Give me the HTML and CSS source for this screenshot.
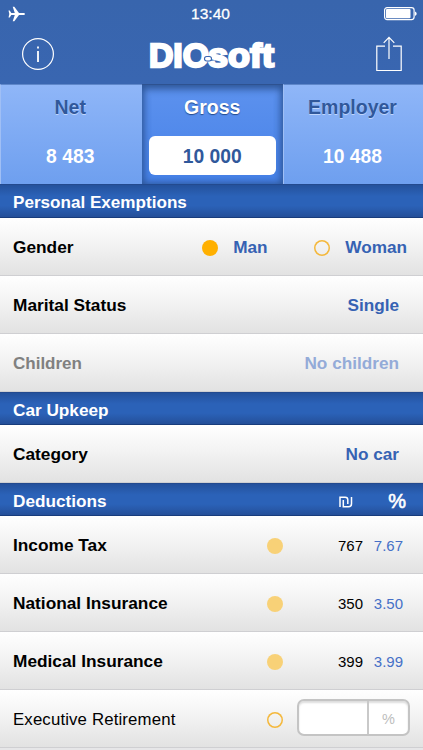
FILE: index.html
```html
<!DOCTYPE html>
<html lang="en">
<head>
    <meta charset="UTF-8">
    <meta name="viewport" content="width=device-width, initial-scale=1.0">
    <title>DIO-soft</title>
    <link rel="stylesheet" href="styles.css">
</head>
<body>
    <header class="header">
        <div class="status">
            <svg class="plane" width="18" height="16" viewBox="0 0 18 16">
                <path d="M17 8c0-.8-.8-1.1-1.800-1.100H11L6.300.7H4.700l2.100 6.200H3.300L1.700 4.600H.5L1.300 8 .5 11.400h1.200l1.600-2.300h3.500L4.700 15.300h1.600L11 9.100h4.200C16.200 9.100 17 8.800 17 8z"/>
            </svg>
            <span class="time">13:40</span>
            <svg class="battery" width="34" height="14" viewBox="0 0 34 14">
                <rect class="line" x=".6" y=".6" width="29.500" height="12" rx="2.500"/>
                <rect x="2" y="2" width="24.500" height="9.200" rx="1"/>
                <path d="M31 4.500c2.200.8 2.200 3.500 0 4.300z"/>
            </svg>
        </div>
        <div class="nav">
            <svg class="info" width="34" height="34" viewBox="0 0 34 34">
                <circle class="line" cx="17" cy="17" r="15.400"/>
                <path d="M16.100 14h1.800v11h-1.800zM16.100 9.500h1.800v2h-1.800z"/>
            </svg>
            <svg class="logo" width="136" height="48" viewBox="0 0 136 48">
                <text x="3" y="36.500" textLength="60" lengthAdjust="spacingAndGlyphs">DIO</text>
                <text x="62" y="36.500" textLength="66" lengthAdjust="spacingAndGlyphs">soft</text>
                <rect class="dot" x="58.500" y="26.500" width="7" height="4.500" rx="2.200"/>
            </svg>
            <svg class="share" width="28" height="38" viewBox="0 0 28 38">
                <path class="line" d="M10 11.200H1.800v24.300h24.400V11.200H18M14 24V2.500M8.700 7.800L14 2.300l5.300 5.500"/>
            </svg>
        </div>
    </header>

    <div class="tabs">
        <div class="tab">
            <span class="tab-name">Net</span>
            <span class="amount">8 483</span>
        </div>
        <div class="tab active">
            <span class="tab-name">Gross</span>
            <span class="amount">10 000</span>
        </div>
        <div class="tab">
            <span class="tab-name">Employer</span>
            <span class="amount">10 488</span>
        </div>
    </div>

    <div class="section first"><span>Personal Exemptions</span></div>
    <div class="row gender">
        <span class="label">Gender</span>
        <span class="radio on"></span>
        <span class="value man">Man</span>
        <span class="radio"></span>
        <span class="value woman">Woman</span>
    </div>
    <div class="row">
        <span class="label">Marital Status</span>
        <span class="value">Single</span>
    </div>
    <div class="row disabled">
        <span class="label">Children</span>
        <span class="value">No children</span>
    </div>

    <div class="section"><span>Car Upkeep</span></div>
    <div class="row">
        <span class="label">Category</span>
        <span class="value">No car</span>
    </div>

    <div class="section">
        <span>Deductions</span>
        <svg class="shekel" width="14" height="12" viewBox="0 0 14 12">
            <path class="line" d="M1 11V1.200h5.200q2.600 0 2.600 2.600V8M4.300 4v6.800h5.200q3 0 3-3V1"/>
        </svg>
        <span class="percent">%</span>
    </div>
    <div class="row tax">
        <span class="label">Income Tax</span>
        <span class="radio fixed"></span>
        <span class="sum">767</span>
        <span class="rate">7.67</span>
    </div>
    <div class="row tax">
        <span class="label">National Insurance</span>
        <span class="radio fixed"></span>
        <span class="sum">350</span>
        <span class="rate">3.50</span>
    </div>
    <div class="row tax">
        <span class="label">Medical Insurance</span>
        <span class="radio fixed"></span>
        <span class="sum">399</span>
        <span class="rate">3.99</span>
    </div>
    <div class="row tax">
        <span class="label thin">Executive Retirement</span>
        <span class="radio"></span>
        <div class="field">
            <span class="field-value"></span>
            <span class="field-unit">%</span>
        </div>
    </div>
</body>
</html>
```
FILE: styles.css
```css
*{
    box-sizing: border-box;
}
body {
    margin: 0;
    height: 750px;
    overflow: hidden;
    background-color: #e6e6e8;
    font-family: "Liberation Sans", Arial, sans-serif;
    font-size: 17px;
    font-weight: bold;
}
svg {
    display: block;
    fill: #fff;
}
.line {
    fill: none;
    stroke: #fff;
    stroke-width: 1.2;
}

/* header */
.header {
    height: 84px;
    color: #fff;
    background: linear-gradient(#3865ad, #3966b1);
}
.status {
    height: 28px;
    padding: 0 5px 0 8px;
    display: grid;
    grid-template-columns: 1fr auto 1fr;
    align-items: center;
}
.time {
    margin-right: 5px;
    font-size: 15.5px;
    font-weight: normal;
    -webkit-text-stroke: 0.3px #fff;
}
.battery {
    justify-self: end;
}
.nav {
    height: 56px;
    padding: 0 20px 4px 21px;
    display: flex;
    justify-content: space-between;
    align-items: center;
}
.logo {
    margin-right: 3px;
    font-size: 33px;
    stroke: #fff;
    stroke-width: 2.3;
}
.logo .dot {
    stroke: #3966b1;
    stroke-width: 1.1;
}

/* tabs */
.tabs {
    height: 100px;
    display: grid;
    grid-template-columns: 141.5px 141.5px 1fr;
}
.tab {
    padding: 0 8px 0 6px;
    display: flex;
    flex-direction: column;
    align-items: center;
    color: #fff;
    border-top: 1px solid #5e87ca;
    border-left: 1px solid #a0bff5;
    background: linear-gradient(#8fb6f8, #6e9fef);
}
.tab-name {
    margin-top: 10px;
    line-height: 24px;
    font-size: 19.5px;
    color: #30589b;
    text-shadow: 0 1px 0 #c0d6fb;
}
.amount {
    width: 100%;
    height: 39px;
    margin-top: 17px;
    line-height: 41px;
    text-align: center;
    font-size: 19.3px;
}
.active {
    padding: 0 7px;
    border-top-color: #2e5290;
    border-left: none;
    background: linear-gradient(#5d92ee, #4681e8);
    box-shadow: inset 0 3px 8px #2e5799, inset 0 0 9px #2e5799;
}
.active .tab-name {
    color: #fff;
    text-shadow: 0 1px 1px #234a8d;
}
.active .amount {
    color: #30589b;
    background-color: #fff;
    border-radius: 6px;
}

/* section bars */
.section {
    height: 33px;
    padding: 4px 17px 0 13px;
    display: flex;
    align-items: center;
    font-size: 17.2px;
    color: #fff;
    border-top: 1px solid #234a8f;
    border-bottom: 1px solid #183c7c;
    background: linear-gradient(#24519c, #2b62b8 35%, #2b62b8 65%, #244f99);
}
.first {
    height: 34px;
    padding-top: 3px;
    font-size: 17.1px;
}
.shekel {
    margin: 1px 35px 0 auto;
}
.shekel .line {
    stroke-width: 1.5;
}
.percent {
    font-size: 20px;
    font-weight: normal;
    -webkit-text-stroke: 0.6px #fff;
}

/* rows */
.row {
    height: 58px;
    padding: 2px 24px 0 13px;
    display: flex;
    align-items: center;
    border-bottom: 1px solid #cfcfd2;
    background: linear-gradient(#fff, #f3f3f3 45%, #e2e2e2);
}
.label {
    flex: 1;
    font-size: 17.3px;
    color: #000;
}
.value {
    font-size: 17.2px;
    color: #3662b3;
}
.disabled .label {
    font-size: 17px;
    color: #808080;
}
.disabled .value {
    color: #94abd8;
}
.thin {
    font-size: 16.8px;
    font-weight: normal;
    letter-spacing: 0.15px;
}
.radio {
    width: 16px;
    height: 16px;
    border-radius: 50%;
    box-shadow: inset 0 0 0 1.5px #f4b83c;
}
.on {
    background-color: #ffb000;
    box-shadow: none;
}
.fixed {
    background-color: #f8d177;
    box-shadow: none;
}
.gender {
    padding-right: 16px;
}
.man {
    width: 81px;
    margin-left: 15px;
}
.woman {
    margin-left: 15px;
}
.tax {
    padding-right: 20px;
}
.sum {
    width: 80px;
    text-align: right;
    font-size: 15px;
    font-weight: normal;
    color: #000;
}
.rate {
    width: 40px;
    text-align: right;
    font-size: 15px;
    font-weight: normal;
    color: #4570c7;
}
.field {
    width: 113px;
    height: 37px;
    margin: 0 -7px 4px 14px;
    display: flex;
    border: 2px solid #c4c4c4;
    border-radius: 7px;
    background-color: #fff;
    box-shadow: inset 0 2px 2px #ddd;
}
.field-value {
    width: 70px;
    border-right: 2px solid #c9c9c9;
}
.field-unit {
    flex: 1;
    line-height: 37px;
    text-align: center;
    font-size: 14.5px;
    font-weight: normal;
    color: #bdbdbd;
}
```
